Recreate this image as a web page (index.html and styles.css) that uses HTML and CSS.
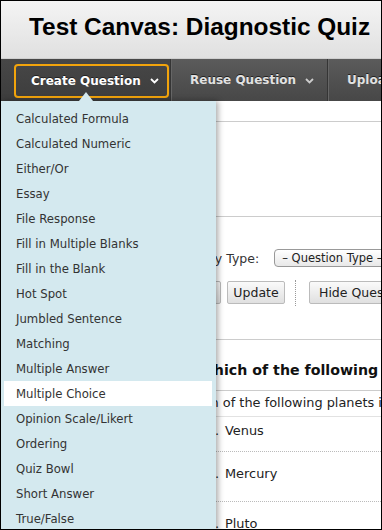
FILE: index.html
```html
<!DOCTYPE html>
<html>
<head>
<meta charset="utf-8">
<link rel="stylesheet" href="styles.css">
</head>
<body>
<div class="frame">
  <header class="title-bar"><h1>Test Canvas: Diagnostic Quiz</h1></header>
  <nav class="action-bar">
    <div class="action-cell first">
      <div class="action active">Create Question <svg class="chev" width="9" height="6" viewBox="0 0 9 6"><path d="M1 1 L4.5 4.5 L8 1" fill="none" stroke="#fff" stroke-width="1.8"/></svg></div>
    </div>
    <div class="action-cell second">
      <div class="action">Reuse Question <svg class="chev" width="9" height="6" viewBox="0 0 9 6"><path d="M1 1 L4.5 4.5 L8 1" fill="none" stroke="#ccc" stroke-width="1.8"/></svg></div>
    </div>
    <div class="action-cell third">
      <div class="action">Upload Questions</div>
    </div>
  </nav>
  <main class="content">
    <div class="blk top"></div>
    <div class="blk intro"></div>
    <div class="filter-row">
      <span class="label">Filter by Type:</span>
      <span class="select">– Question Type –</span>
    </div>
    <div class="btn-row">
      <span class="btn ghost">Go</span>
      <span class="btn update">Update</span>
      <span class="dots"></span>
      <span class="btn">Hide Question Details</span>
    </div>
    <div class="blk spacer"></div>
    <h2 class="q-title">1. Which of the following planets</h2>
    <p class="q-text">Which of the following planets is closest to the sun?</p>
    <ul class="answers">
      <li class="r1"><span class="letter">a.</span>Venus</li>
      <li class="r2"><span class="letter">b.</span>Mercury</li>
      <li class="r3"><span class="letter">c.</span>Pluto</li>
    </ul>
  </main>
  <span class="caret"></span>
  <ul class="dropdown">
    <li>Calculated Formula</li>
    <li>Calculated Numeric</li>
    <li>Either/Or</li>
    <li>Essay</li>
    <li>File Response</li>
    <li>Fill in Multiple Blanks</li>
    <li>Fill in the Blank</li>
    <li>Hot Spot</li>
    <li>Jumbled Sentence</li>
    <li>Matching</li>
    <li>Multiple Answer</li>
    <li class="hover">Multiple Choice</li>
    <li>Opinion Scale/Likert</li>
    <li>Ordering</li>
    <li>Quiz Bowl</li>
    <li>Short Answer</li>
    <li>True/False</li>
  </ul>
</div>
</body>
</html>
```

FILE: styles.css
```css
* { box-sizing: border-box; }
html, body { margin: 0; padding: 0; background: #fff; }
body { font-family: "DejaVu Sans", "Liberation Sans", sans-serif; }

.frame {
  position: relative;
  width: 382px;
  height: 530px;
  border: 1px solid #000;
  overflow: hidden;
  background: #fff;
}

.title-bar {
  height: 58px;
  background: linear-gradient(#f4f4f4, #e0e0e0);
  padding: 12px 0 0 28px;
  border-bottom: 1px solid #cfcfcf;
}
.title-bar h1 {
  margin: 0;
  font-family: "Liberation Sans", "DejaVu Sans", sans-serif;
  font-size: 24.4px;
  line-height: 28px;
  font-weight: bold;
  color: #000;
  white-space: nowrap;
}

.action-bar {
  height: 42px;
  display: flex;
  background: linear-gradient(#5b5b5b, #474747);
}
.action-cell {
  display: flex;
  align-items: center;
  flex: none;
  border-right: 1px solid #353535;
  box-shadow: 1px 0 0 #666;
}
.action-cell.first { width: 170px; padding-left: 13px; background: linear-gradient(#474747, #3d3d3d); }
.action-cell.second { width: 157px; padding-left: 19px; }
.action-cell.third { flex: 1; padding-left: 19px; border-right: 0; box-shadow: none; }
.action {
  font-size: 12px;
  font-weight: bold;
  color: #e2e2e2;
  white-space: nowrap;
  display: flex;
  align-items: center;
  gap: 9px;
  text-shadow: 0 -1px 0 #222;
}
.action.active {
  color: #fff;
  width: 155px;
  height: 34px;
  margin-top: 1px;
  border: 2px solid #f2a40c;
  border-radius: 4px;
  padding-left: 15px;
}
.chev { flex: none; margin-top: 1px; }

.content {
  padding-left: 212px;
  font-size: 12px;
  color: #222;
}
.blk.top { height: 21px; border-bottom: 1px solid #ccc; }
.blk.intro { height: 95px; border-bottom: 1px solid #ccc; }
.filter-row {
  display: flex;
  align-items: center;
  height: 50px;
  padding-top: 32px;
  margin-left: -41px;
  white-space: nowrap;
}
.filter-row .label { font-size: 12.5px; color: #333; }
.filter-row .select {
  margin-left: 15px;
  height: 18px;
  padding: 0 7px;
  border: 1px solid #999;
  border-radius: 4px;
  background: linear-gradient(#fff, #e8e8e8);
  font-size: 11.5px;
  line-height: 16px;
  color: #222;
  flex: none;
}
.btn-row {
  display: flex;
  align-items: center;
  height: 37px;
  padding-top: 14px;
  margin-left: -41px;
  white-space: nowrap;
}
.btn {
  height: 23px;
  border: 1px solid #bbb;
  border-radius: 2px;
  background: linear-gradient(#fafafa, #e0e0e0);
  font-size: 12.5px;
  line-height: 21px;
  padding: 0 9px;
  color: #222;
  flex: none;
}
.btn.ghost { width: 49px; margin-right: 6px; color: transparent; }
.btn.update { width: 58px; padding: 0; text-align: center; }
.dots {
  width: 0;
  height: 26px;
  border-left: 1px dotted #999;
  margin: 0 13px 0 10px;
}
.blk.spacer { height: 36px; border-bottom: 1px solid #ccc; }
.q-title {
  margin: 0 0 0 -35px;
  height: 51px;
  padding-top: 19px;
  font-size: 14.2px;
  line-height: 22px;
  font-weight: bold;
  color: #111;
  white-space: nowrap;
  border-bottom: 1px solid #ccc;
}
.q-text {
  margin: 0 0 0 -34px;
  height: 26px;
  line-height: 24px;
  font-size: 12.9px;
  color: #222;
  white-space: nowrap;
  border-bottom: 1px solid #e2e2e2;
}
.answers { list-style: none; margin: 0 0 0 -10px; padding: 0; }
.answers li {
  font-size: 12.9px;
  color: #222;
  white-space: nowrap;
  border-bottom: 1px dotted #bbb;
}
.answers li.r1 { height: 35px; line-height: 22px; padding-top: 3px; }
.answers li.r2 { height: 50px; line-height: 40px; padding-top: 2px; }
.answers li.r3 { height: 40px; line-height: 40px; padding-top: 2px; border-bottom: 0; }
.letter { display: inline-block; width: 16px; text-align: right; margin-right: 6px; }

.caret {
  position: absolute;
  left: 78px;
  top: 91px;
  width: 0;
  height: 0;
  border-left: 7px solid transparent;
  border-right: 7px solid transparent;
  border-bottom: 9px solid #d4e9ef;
  z-index: 3;
}
.dropdown {
  position: absolute;
  left: 0;
  top: 100px;
  width: 215px;
  height: 440px;
  margin: 0;
  padding: 5px 4px 0 3px;
  list-style: none;
  background: #d4e9ef;
  box-shadow: 2px 0 6px rgba(0,0,0,0.35);
  z-index: 2;
}
.dropdown li {
  height: 25px;
  line-height: 24px;
  padding: 1px 0 0 12px;
  font-size: 11.7px;
  color: #333;
  white-space: nowrap;
}
.dropdown li.hover { background: #fff; }
```
